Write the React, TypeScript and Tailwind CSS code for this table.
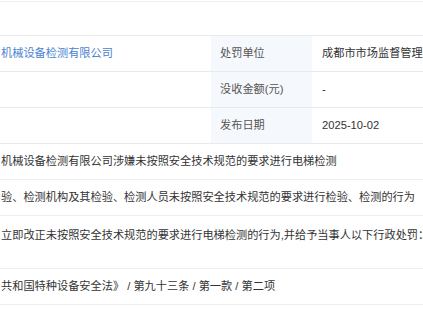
import React from 'react';

const rows = [
  { left: '机械设备检测有限公司', label: '处罚单位', value: '成都市市场监督管理局' },
  { left: '', label: '没收金额(元)', value: '-' },
  { left: '', label: '发布日期', value: '2025-10-02' },
];

const lines = [
  { text: '机械设备检测有限公司涉嫌未按照安全技术规范的要求进行电梯检测', tall: false },
  { text: '验、检测机构及其检验、检测人员未按照安全技术规范的要求进行检验、检测的行为', tall: false },
  { text: '立即改正未按照安全技术规范的要求进行电梯检测的行为,并给予当事人以下行政处罚：', tall: true },
  { text: '共和国特种设备安全法》 / 第九十三条 / 第一款 / 第二项', tall: false },
];

const App: React.FC = () => {
  return (
    <div
      className="w-[423px] h-[318px] overflow-hidden bg-white text-[11.2px] text-[#333]"
      style={{ fontFamily: '"Liberation Sans", "Noto Sans CJK SC", sans-serif' }}
    >
      {/* 顶部空白 */}
      <div className="h-[35px] pt-px">
        <div className="border-t border-[#f0f1f3]" />
      </div>

      {/* 信息表格 */}
      <div className="border-t border-[#e8eaed]">
        {rows.map((row, i) => (
          <div key={i} className="grid grid-cols-[211px_101px_1fr] h-[36px] border-b border-[#e8eaed]">
            <div className="flex items-center whitespace-nowrap overflow-hidden text-[#4a82d0] pl-px">
              {row.left}
            </div>
            <div className="flex items-center bg-[#f5f8fc] pl-[9px] text-[#555] whitespace-nowrap">
              {row.label}
            </div>
            <div className="flex items-center pl-[10px] whitespace-nowrap overflow-hidden">
              {row.value}
            </div>
          </div>
        ))}
      </div>

      {/* 处罚内容 */}
      <div>
        {lines.map((line, i) => (
          <div
            key={i}
            className={`border-b border-[#eceef0] whitespace-nowrap overflow-hidden pl-px ${
              line.tall ? 'h-[53px] pt-[11px]' : 'h-[36px] flex items-center'
            }`}
          >
            {line.text}
          </div>
        ))}
      </div>
    </div>
  );
};

export default App;
